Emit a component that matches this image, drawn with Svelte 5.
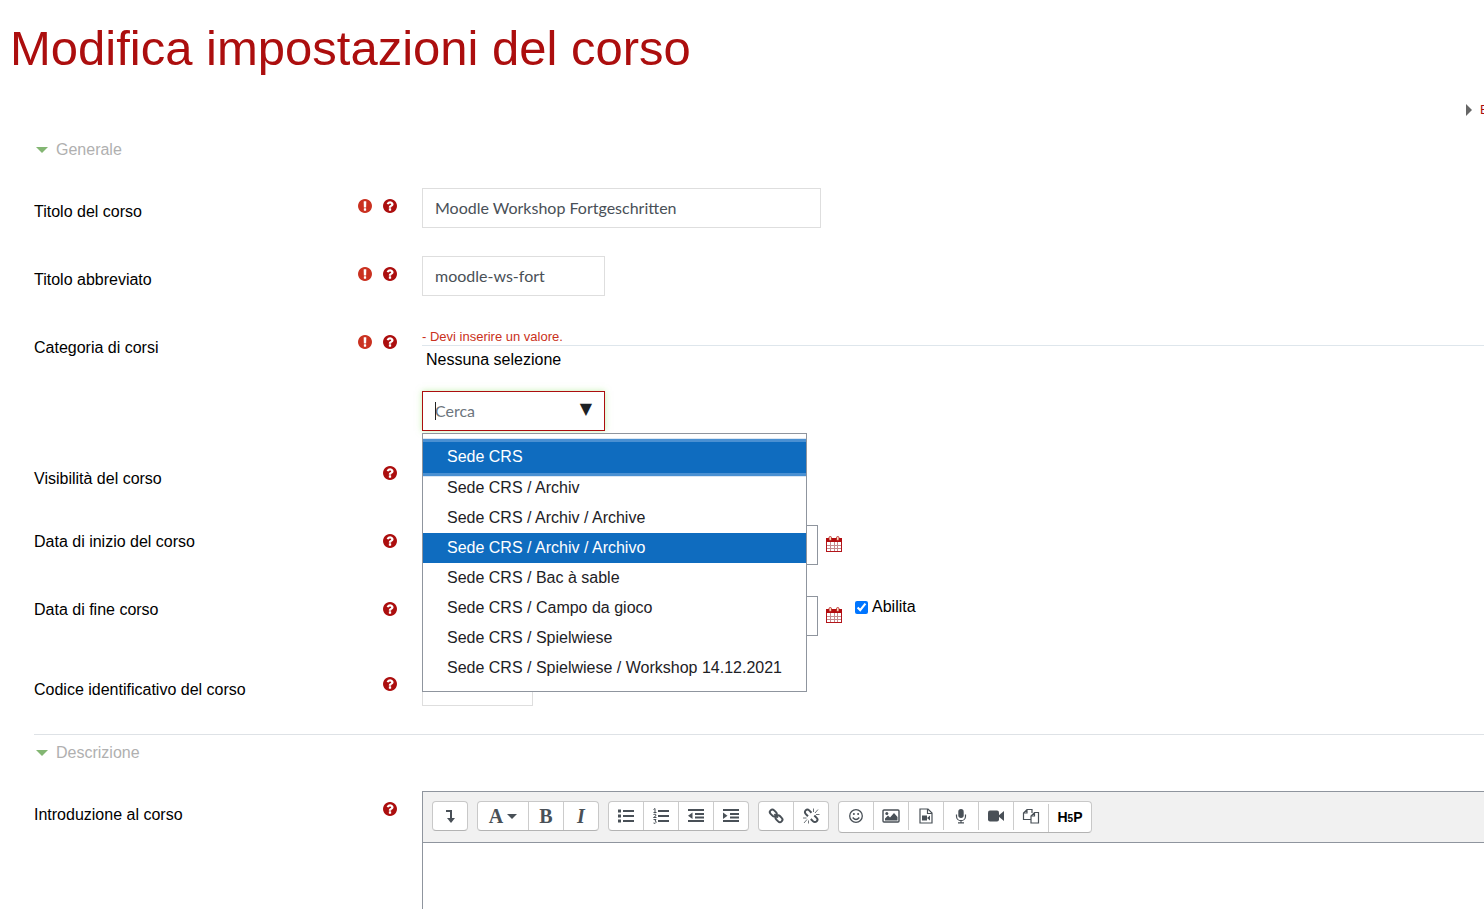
<script lang="ts">
	interface ToolButton {
		icon: string;
		title: string;
		wide?: boolean;
	}

	const categories = [
		'Sede CRS',
		'Sede CRS / Archiv',
		'Sede CRS / Archiv / Archive',
		'Sede CRS / Archiv / Archivo',
		'Sede CRS / Bac à sable',
		'Sede CRS / Campo da gioco',
		'Sede CRS / Spielwiese',
		'Sede CRS / Spielwiese / Workshop 14.12.2021'
	];

	const toolbar: ToolButton[][] = [
		[{ icon: 'toggle', title: 'Mostra altri pulsanti' }],
		[
			{ icon: 'styles', title: 'Stili paragrafo', wide: true },
			{ icon: 'bold', title: 'Grassetto' },
			{ icon: 'italic', title: 'Corsivo' }
		],
		[
			{ icon: 'ul', title: 'Elenco puntato' },
			{ icon: 'ol', title: 'Elenco numerato' },
			{ icon: 'outdent', title: 'Riduci rientro' },
			{ icon: 'indent', title: 'Aumenta rientro' }
		],
		[
			{ icon: 'link', title: 'Link' },
			{ icon: 'unlink', title: 'Elimina link' }
		],
		[
			{ icon: 'smile', title: 'Emoji' },
			{ icon: 'image', title: 'Immagine' },
			{ icon: 'media', title: 'Media' },
			{ icon: 'mic', title: 'Registra audio' },
			{ icon: 'video', title: 'Registra video' },
			{ icon: 'files', title: 'Gestione file' },
			{ icon: 'h5p', title: 'H5P' }
		]
	];

	let fullname = $state('Moodle Workshop Fortgeschritten');
	let shortname = $state('moodle-ws-fort');
	let idnumber = $state('');
	let search = $state('');
	let summary = $state('');
	let endEnabled = $state(true);
	let active = $state(0);
	let hovered = $state(3);
	let generalOpen = $state(true);
	let descriptionOpen = $state(true);

	function choose(index: number) {
		active = index;
		search = categories[index];
	}

	function handleKeyDown(e: KeyboardEvent) {
		if (e.key === 'ArrowDown') {
			active = Math.min(active + 1, categories.length - 1);
		} else if (e.key === 'ArrowUp') {
			active = Math.max(active - 1, 0);
		} else if (e.key === 'Enter') {
			choose(active);
		}
	}
</script>

{#snippet required()}
	<svg class="required" width="14" height="14" viewBox="128 128 1536 1536" role="img" aria-label="Obbligatorio">
		<path d="M896 128q209 0 385.500 103t279.500 279.500 103 385.500-103 385.500-279.500 279.500-385.500 103-385.500-103-279.500-279.500-103-385.500 103-385.500 279.500-279.500 385.500-103zm128 1247v-190q0-14-9-23.500t-22-9.500h-192q-13 0-23 10t-10 23v190q0 13 10 23t23 10h192q13 0 22-9.500t9-23.500zm-2-344l18-621q0-12-10-18-10-8-24-8h-220q-14 0-24 8-10 6-10 18l17 621q0 10 10 17.500t24 7.500h185q14 0 23.500-7.500t10.500-17.500z" />
	</svg>
{/snippet}

{#snippet help()}
	<button type="button" class="help" aria-label="Aiuto">
		<svg width="14" height="14" viewBox="128 128 1536 1536">
			<path d="M1024 1376v-192q0-14-9-23t-23-9h-192q-14 0-23 9t-9 23v192q0 14 9 23t23 9h192q14 0 23-9t9-23zm256-672q0-88-55.500-163t-138.500-116-170-41q-243 0-371 213-15 24 8 42l132 100q7 6 19 6 16 0 25-12 53-68 86-92 34-24 86-24 48 0 85.500 26t37.500 59q0 38-20 61t-68 45q-63 28-115.500 86.500t-52.500 125.500v36q0 14 9 23t23 9h192q14 0 23-9t9-23q0-19 21.500-49.500t54.500-49.500q32-18 49-28.500t46-35 44.500-48 28-60.500 12.500-81zm384 192q0 209-103 385.500t-279.500 279.500-385.500 103-385.500-103-279.500-279.500-103-385.500 103-385.500 279.500-279.500 385.500-103 385.500 103 279.500 279.500 103 385.500z" />
		</svg>
	</button>
{/snippet}

{#snippet calendar()}
	<button type="button" class="calendar" aria-label="Calendario">
		<svg width="16" height="18" viewBox="0 0 16 18">
			<rect x="0.500" y="2.500" width="15" height="13" fill="#fff" stroke="#b3151a" />
			<path d="M0 2h16v4H0z" fill="#b30d10" />
			<path d="M4.500 6v9M8.500 6v9M11.500 6v9M1 9.500h14M1 12.500h14" stroke="#c58a8e" />
			<rect x="3" y="0.500" width="2.500" height="4" rx="1.200" fill="#fbe3c0" stroke="#b3151a" stroke-width="0.800" />
			<rect x="10.500" y="0.500" width="2.500" height="4" rx="1.200" fill="#fbe3c0" stroke="#b3151a" stroke-width="0.800" />
		</svg>
	</button>
{/snippet}

{#snippet toolIcon(name: string)}
	{#if name === 'styles'}
		<span class="glyph">A</span><span class="caret-down"></span>
	{:else if name === 'bold'}
		<span class="glyph">B</span>
	{:else if name === 'italic'}
		<span class="glyph slanted">I</span>
	{:else if name === 'h5p'}
		<span class="h5p">H<small>5</small>P</span>
	{:else}
		<svg width="18" height="16" viewBox="0 0 18 16" fill="none" stroke="currentColor">
			{#if name === 'toggle'}
				<path d="M5 3h5v8" stroke-width="2" />
				<path d="M6 10h8l-4 5z" fill="currentColor" stroke="none" />
			{:else if name === 'ul'}
				<path d="M6 3h11M6 8h11M6 13h11" stroke-width="2" />
				<path d="M1 3h3M1 8h3M1 13h3" stroke-width="3" />
			{:else if name === 'ol'}
				<path d="M6 3h11M6 8h11M6 13h11" stroke-width="2" />
				<path d="M1.500 1.500L3 .5V4.500M1.500 4.500h3M1.500 6.500q2.500-1 2.500.5T1.500 9.500H4.500M1.500 11.500h2.500l-1 1.500q1.500 0 1 1.500t-2.500.5" />
			{:else if name === 'outdent'}
				<path d="M1 2h16M8 6h9M8 9.500h9M1 13h16" stroke-width="2" />
				<path d="M5.500 4.500v6.500L1 7.800z" fill="currentColor" stroke="none" />
			{:else if name === 'indent'}
				<path d="M1 2h16M8 6h9M8 9.500h9M1 13h16" stroke-width="2" />
				<path d="M1 4.500v6.500l4.500-3.200z" fill="currentColor" stroke="none" />
			{:else if name === 'link'}
				<g transform="rotate(45 9 8)" stroke-width="2">
					<rect x="1.200" y="5.300" width="7.500" height="5" rx="2.500" />
					<rect x="9.300" y="5.300" width="7.500" height="5" rx="2.500" />
					<path d="M6.500 7.800h5" />
				</g>
			{:else if name === 'unlink'}
				<g transform="rotate(45 9 8)" stroke-width="2">
					<path d="M7 5.300H3.700a2.500 2.500 0 0 0 0 5H7M11 5.300h3.300a2.500 2.500 0 0 1 0 5H11" />
				</g>
				<path d="M11.500 4V.5M13 5l3-3.500M14 6.500h3.500M1 10h3.500M5 11.500L2 15M6.500 12.500v3" stroke-width="0.800" />
			{:else if name === 'smile'}
				<circle cx="9" cy="8" r="6.300" stroke-width="1.300" />
				<path d="M5.700 9.500q3.300 4 6.600 0" stroke-width="1.300" />
				<circle cx="6.900" cy="6" r="1" fill="currentColor" stroke="none" />
				<circle cx="11.100" cy="6" r="1" fill="currentColor" stroke="none" />
			{:else if name === 'image'}
				<rect x="1" y="2" width="16" height="12" rx="1" stroke-width="1.400" />
				<circle cx="4.800" cy="5.500" r="1.500" fill="currentColor" stroke="none" />
				<path d="M3 12.500v-2l3-3 2 2 4-4.500 3.500 4v3.500z" fill="currentColor" stroke="none" />
			{:else if name === 'media'}
				<path d="M3 1h8l4 4v10H3zM10.500 1v4.500H15" stroke-width="1.200" />
				<path d="M5 7.500h5v5H5zM10 10l3-2.500v5z" fill="currentColor" stroke="none" />
			{:else if name === 'mic'}
				<rect x="6.300" y="1" width="5.400" height="9" rx="2.700" fill="currentColor" stroke="none" />
				<path d="M4.500 6.500v1.700a4.500 4.500 0 0 0 9 0V6.500M9 12.500v2.300M6 14.800h6" stroke-width="1.200" />
			{:else if name === 'video'}
				<rect x="1" y="2.500" width="11" height="11" rx="2" fill="currentColor" stroke="none" />
				<path d="M11 8l6-5v10z" fill="currentColor" stroke="none" />
			{:else if name === 'files'}
				<path d="M9 11.500H1.500V5L5 1.500h5V5M5 1.500V5H1.500" stroke-width="1.200" />
				<path d="M12.500 4.500H16.500V15H9V8zM12.500 4.500V8H9" stroke-width="1.200" />
			{/if}
		</svg>
	{/if}
{/snippet}

<div class="page">
	<h1>Modifica impostazioni del corso</h1>

	<form class="mform" onsubmit={(e) => e.preventDefault()}>
		<div class="collapse-all">
			<a href="#expand">Espandi tutto</a>
		</div>

		<section>
			<h2>
				<button type="button" class="legend" onclick={() => (generalOpen = !generalOpen)}>Generale</button>
			</h2>

			{#if generalOpen}
				<div class="row">
					<label for="fullname">Titolo del corso</label>
					<div class="marks">{@render required()}{@render help()}</div>
					<div class="field">
						<input id="fullname" class="text long" type="text" bind:value={fullname} />
					</div>
				</div>

				<div class="row">
					<label for="shortname">Titolo abbreviato</label>
					<div class="marks">{@render required()}{@render help()}</div>
					<div class="field">
						<input id="shortname" class="text medium" type="text" bind:value={shortname} />
					</div>
				</div>

				<div class="row category">
					<label for="category">Categoria di corsi</label>
					<div class="marks">{@render required()}{@render help()}</div>
					<div class="field">
						<div class="error">- Devi inserire un valore.</div>
						<div class="selection">Nessuna selezione</div>
						<div class="autocomplete">
							<input
								id="category"
								class="text medium invalid"
								type="text"
								role="combobox"
								aria-expanded="true"
								aria-controls="category-list"
								placeholder="Cerca"
								bind:value={search}
								onkeydown={handleKeyDown}
							/>
							<span class="cursor"></span>
							<span class="arrow">▼</span>
							<ul id="category-list" class="suggestions" role="listbox">
								{#each categories as category, i}
									<!-- svelte-ignore a11y_click_events_have_key_events -->
									<li
										role="option"
										aria-selected={i === active}
										class:active={i === active}
										class:hovered={i === hovered}
										onmouseenter={() => (hovered = i)}
										onclick={() => choose(i)}
									>
										{category}
									</li>
								{/each}
							</ul>
						</div>
					</div>
				</div>

				<div class="row visibility">
					<label for="visible">Visibilità del corso</label>
					<div class="marks">{@render help()}</div>
					<div class="field">
						<select id="visible"><option>Visualizza</option></select>
					</div>
				</div>

				<div class="row date">
					<label for="startday">Data di inizio del corso</label>
					<div class="marks">{@render help()}</div>
					<div class="field">
						<select id="startday" class="day"><option>15</option></select>
						<select class="month" aria-label="Mese"><option>dicembre</option></select>
						<select class="day" aria-label="Anno"><option>2021</option></select>
						<select class="day" aria-label="Ora"><option>00</option></select>
						{@render calendar()}
					</div>
				</div>

				<div class="row date end">
					<label for="endday">Data di fine corso</label>
					<div class="marks">{@render help()}</div>
					<div class="field">
						<select id="endday" class="day"><option>15</option></select>
						<select class="month" aria-label="Mese"><option>dicembre</option></select>
						<select class="day" aria-label="Anno"><option>2022</option></select>
						<select class="day" aria-label="Ora"><option>00</option></select>
						{@render calendar()}
						<label class="enable"><input type="checkbox" bind:checked={endEnabled} />Abilita</label>
					</div>
				</div>

				<div class="row">
					<label for="idnumber">Codice identificativo del corso</label>
					<div class="marks">{@render help()}</div>
					<div class="field">
						<input id="idnumber" class="text short" type="text" bind:value={idnumber} />
					</div>
				</div>
			{/if}
		</section>

		<section class="description">
			<h2>
				<button type="button" class="legend" onclick={() => (descriptionOpen = !descriptionOpen)}>Descrizione</button>
			</h2>

			{#if descriptionOpen}
				<div class="row">
					<label for="summary">Introduzione al corso</label>
					<div class="marks">{@render help()}</div>
					<div class="editor">
						<div class="toolbar" role="toolbar">
							{#each toolbar as group}
								<div class="group">
									{#each group as tool}
										<button type="button" class:wide={tool.wide} class:h5p-button={tool.icon === 'h5p'} title={tool.title}>
											{@render toolIcon(tool.icon)}
										</button>
									{/each}
								</div>
							{/each}
						</div>
						<textarea id="summary" bind:value={summary}></textarea>
					</div>
				</div>
			{/if}
		</section>
	</form>
</div>

<style>
	:global(body) {
		margin: 0;
		background-color: #fff;
	}

	.page {
		box-sizing: border-box;
		height: 100vh;
		overflow: hidden;
		padding: 20px 0 0 10px;
		font-family: Arial, "Liberation Sans", sans-serif;
		font-size: 16px;
		line-height: 18px;
		color: #000;
	}

	h1 {
		margin: 0;
		font-size: 49px;
		font-weight: 400;
		line-height: 56px;
		color: #ac0e0e;
	}

	/* The form runs on past the right edge of the window */
	.mform {
		margin: 24px -80px 0 24px;
	}

	.collapse-all {
		display: flex;
		justify-content: flex-end;
	}

	.collapse-all a {
		display: flex;
		align-items: center;
		gap: 8px;
		width: 98px;
		font-size: 13px;
		line-height: 20px;
		white-space: nowrap;
		color: #ac0e0e;
		text-decoration: none;
	}

	.collapse-all a::before {
		content: "";
		border: solid transparent;
		border-width: 6px 0 6px 6px;
		border-left-color: #666;
	}

	h2 {
		margin: 0;
		padding: 21px 0 29px 2px;
		font-size: 16px;
		line-height: 18px;
	}

	.legend {
		display: flex;
		align-items: center;
		gap: 8px;
		padding: 0;
		border: 0;
		background: none;
		font-family: inherit;
		font-size: 16px;
		line-height: 18px;
		color: #b0b0b0;
		cursor: pointer;
	}

	.legend::before {
		content: "";
		border: solid transparent;
		border-width: 6px 6px 0 6px;
		border-top-color: #83b673;
	}

	.row {
		display: grid;
		grid-template-columns: 314px 74px minmax(0, 1fr);
		min-height: 68px;
		align-items: start;
	}

	.row > label {
		padding-top: 15px;
	}

	.marks {
		display: flex;
		align-items: center;
		justify-content: flex-end;
		gap: 11px;
		height: 36px;
		padding-right: 25px;
	}

	.marks svg {
		display: block;
	}

	.required {
		fill: #ca3120;
	}

	.help,
	.calendar {
		padding: 0;
		border: 0;
		background: none;
		cursor: pointer;
	}

	.help svg {
		fill: #ac0e0e;
	}

	.text {
		display: block;
		box-sizing: border-box;
		height: 40px;
		padding: 0 12px 2px;
		border: 1px solid #dedede;
		border-radius: 0;
		background-color: #fff;
		font-family: "Century Gothic", Lato, sans-serif;
		font-size: 16px;
		color: #495057;
	}

	.text::placeholder {
		color: #6c757d;
		opacity: 1;
	}

	.long {
		width: 399px;
	}

	.medium {
		width: 183px;
	}

	.short {
		width: 111px;
	}

	.text.invalid {
		border-color: #ac0e0e;
		box-shadow: 0 0 6px rgba(140, 230, 100, 0.5);
		outline: none;
	}

	.row.category {
		min-height: 131px;
	}

	.error {
		padding-top: 4px;
		border-bottom: 1px solid #dee6ec;
		font-size: 13px;
		line-height: 17px;
		color: #ca3120;
	}

	.selection {
		padding: 5px 4px 22px;
	}

	.autocomplete {
		position: relative;
		width: 183px;
	}

	.cursor {
		position: absolute;
		top: 11px;
		left: 13px;
		width: 1px;
		height: 18px;
		background-color: #222;
	}

	.arrow {
		position: absolute;
		top: 9px;
		right: 13px;
		font-family: "DejaVu Sans", sans-serif;
		color: #1d2125;
		pointer-events: none;
	}

	.suggestions {
		position: absolute;
		top: 42px;
		left: 0;
		z-index: 3;
		box-sizing: border-box;
		min-width: 385px;
		margin: 0;
		padding: 8px 0;
		border: 1px solid #8f959e;
		overflow: hidden;
		background-color: #fff;
		list-style: none;
	}

	.suggestions li {
		padding: 0 24px;
		line-height: 30px;
		white-space: nowrap;
		color: #1d2125;
		cursor: pointer;
	}

	.suggestions li.active {
		padding-bottom: 1px;
		box-shadow: 0 0 0 3px #4a90d2, 0 0 0 4px #dbe7f3;
	}

	.suggestions li.active,
	.suggestions li.hovered {
		background-color: #0f6cbf;
		color: #fff;
	}

	select {
		box-sizing: border-box;
		width: 160px;
		height: 40px;
		padding: 0 12px;
		border: 1px solid #8f959e;
		border-radius: 0;
		background-color: #fff;
		font-family: inherit;
		font-size: 16px;
		color: #495057;
		appearance: none;
	}

	.row.visibility {
		min-height: 63px;
	}

	.date .marks {
		height: 46px;
	}

	.date .field {
		display: flex;
		align-items: center;
		gap: 8px;
		padding-top: 7px;
	}

	.date .day {
		width: 84px;
	}

	.date .month {
		width: 120px;
	}

	.calendar svg {
		display: block;
	}

	.date.end {
		min-height: 80px;
	}

	.date.end .field {
		padding-top: 10px;
	}

	.enable {
		display: flex;
		align-self: flex-start;
		align-items: center;
		gap: 4px;
		padding: 2px 5px;
	}

	.enable input {
		width: 13px;
		height: 13px;
		margin: 0;
	}

	.description {
		border-top: 1px solid #dee2e6;
	}

	.description h2 {
		padding-top: 9px;
	}

	.editor {
		border: 1px solid #8f959e;
	}

	.toolbar {
		display: flex;
		align-items: flex-start;
		gap: 9px;
		min-height: 32px;
		padding: 9px;
		border-bottom: 1px solid #8f959e;
		background-color: #f1f1f1;
	}

	.group {
		display: flex;
		border: 1px solid #c8c8c8;
		border-bottom-color: #b3b3b3;
		border-radius: 4px;
		background-color: #fff;
	}

	.group button {
		display: flex;
		align-items: center;
		justify-content: center;
		box-sizing: border-box;
		width: 34px;
		height: 28px;
		padding: 0;
		border: 0;
		background: none;
		color: #495057;
		cursor: pointer;
	}

	.group button + button {
		width: 35px;
		border-left: 1px solid #ccc;
	}

	.group button.wide {
		width: 50px;
		gap: 4px;
	}

	.group button.h5p-button {
		width: 43px;
		margin-top: 2px;
	}

	.glyph {
		font-family: "Liberation Serif", serif;
		font-size: 20px;
		font-weight: 700;
		line-height: 20px;
	}

	.slanted {
		font-style: italic;
	}

	.caret-down {
		border: solid transparent;
		border-width: 5px 5px 0 5px;
		border-top-color: #495057;
	}

	.h5p {
		font-family: "Liberation Sans", sans-serif;
		font-size: 14px;
		font-weight: 700;
		line-height: 14px;
		color: #000;
	}

	.h5p small {
		font-size: 10px;
	}

	textarea {
		display: block;
		box-sizing: border-box;
		width: 100%;
		height: 240px;
		padding: 8px;
		border: 0;
		resize: none;
		font-family: inherit;
		font-size: 16px;
	}
</style>
